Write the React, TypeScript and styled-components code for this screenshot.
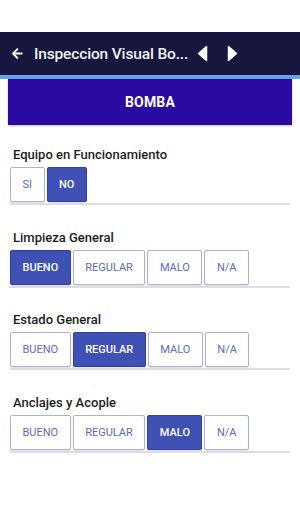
import React from "react";
import styled, { createGlobalStyle } from "styled-components";

const Global = createGlobalStyle`
  html, body { margin: 0; padding: 0; background: #ffffff; }
  body { font-family: Roboto, "Liberation Sans", Arial, sans-serif; }
  * { box-sizing: border-box; }
`;

const Page = styled.div`
  width: 300px;
  min-height: 509px;
  background: #ffffff;
  padding-top: 32px;
`;

const Header = styled.header`
  height: 47px;
  background: #16163f;
  border-bottom: 4px solid #5fa6ea;
  display: flex;
  align-items: center;
  padding: 0 0 0 10px;
  color: #ffffff;
`;

const Title = styled.div`
  margin-left: 9px;
  font-size: 15.5px;
  letter-spacing: -0.15px;
  font-weight: 500;
  color: #f2f2f6;
  white-space: nowrap;
`;

const NavIcons = styled.div`
  display: flex;
  align-items: center;
  gap: 19px;
  margin-left: 9px;
`;

const Banner = styled.div`
  margin: 0 8px;
  height: 46px;
  background: #2a0aa0;
  color: #ffffff;
  display: flex;
  align-items: center;
  justify-content: center;
  font-weight: 700;
  font-size: 14px;
  letter-spacing: 0.2px;
  box-shadow: 0 1px 2px rgba(0, 0, 0, 0.25);
`;

const Content = styled.div`
  padding: 22px 10px 0 10px;
`;

const Section = styled.section`
  margin-bottom: 24.5px;
`;

const Label = styled.div`
  font-size: 13px;
  font-weight: 500;
  color: #1e1e1e;
  line-height: 16px;
  padding-left: 3px;
  margin-bottom: 4px;
`;

const Group = styled.div`
  display: flex;
  gap: 2px;
  padding-bottom: 1px;
  border-bottom: 2px solid #dedede;
  width: 280px;
`;

const Option = styled.div<{ $active: boolean }>`
  height: 35px;
  padding: 0 11.5px;
  display: flex;
  align-items: center;
  justify-content: center;
  font-size: 11px;
  text-transform: uppercase;
  border-radius: 2px;
  border: 1px solid ${(p) => (p.$active ? "#2f3fa8" : "#a9b0e2")};
  background: ${(p) => (p.$active ? "#3f51b5" : "#ffffff")};
  color: ${(p) => (p.$active ? "#ffffff" : "#5c6bc0")};
  font-weight: ${(p) => (p.$active ? 500 : 400)};
  box-shadow: 0 1px 1px rgba(0, 0, 0, 0.12);
`;

const sections: { label: string; options: string[]; active: number }[] = [
  { label: "Equipo en Funcionamiento", options: ["SI", "NO"], active: 1 },
  { label: "Limpieza General", options: ["BUENO", "REGULAR", "MALO", "N/A"], active: 0 },
  { label: "Estado General", options: ["BUENO", "REGULAR", "MALO", "N/A"], active: 1 },
  { label: "Anclajes y Acople", options: ["BUENO", "REGULAR", "MALO", "N/A"], active: 2 },
];

export default function App() {
  return (
    <Page>
      <Global />
      <Header>
        <svg width="15" height="15" viewBox="0 0 24 24">
          <path d="M20 10.5H8.4l5.3-5.3L11.6 3 2.6 12l9 9 2.1-2.2-5.3-5.3H20z" fill="#ffffff" />
        </svg>
        <Title>Inspeccion Visual Bo...</Title>
        <NavIcons>
          <svg width="11" height="17" viewBox="0 0 11 17">
            <path d="M9.5 1.5 L1.5 8.5 L9.5 15.5 Z" fill="#ffffff" stroke="#ffffff" strokeWidth="1.5" strokeLinejoin="round" />
          </svg>
          <svg width="11" height="17" viewBox="0 0 11 17">
            <path d="M1.5 1.5 L9.5 8.5 L1.5 15.5 Z" fill="#ffffff" stroke="#ffffff" strokeWidth="1.5" strokeLinejoin="round" />
          </svg>
        </NavIcons>
      </Header>
      <Banner>BOMBA</Banner>
      <Content>
        {sections.map((s) => (
          <Section key={s.label}>
            <Label>{s.label}</Label>
            <Group>
              {s.options.map((o, i) => (
                <Option key={o} $active={i === s.active}>
                  {o}
                </Option>
              ))}
            </Group>
          </Section>
        ))}
      </Content>
    </Page>
  );
}
